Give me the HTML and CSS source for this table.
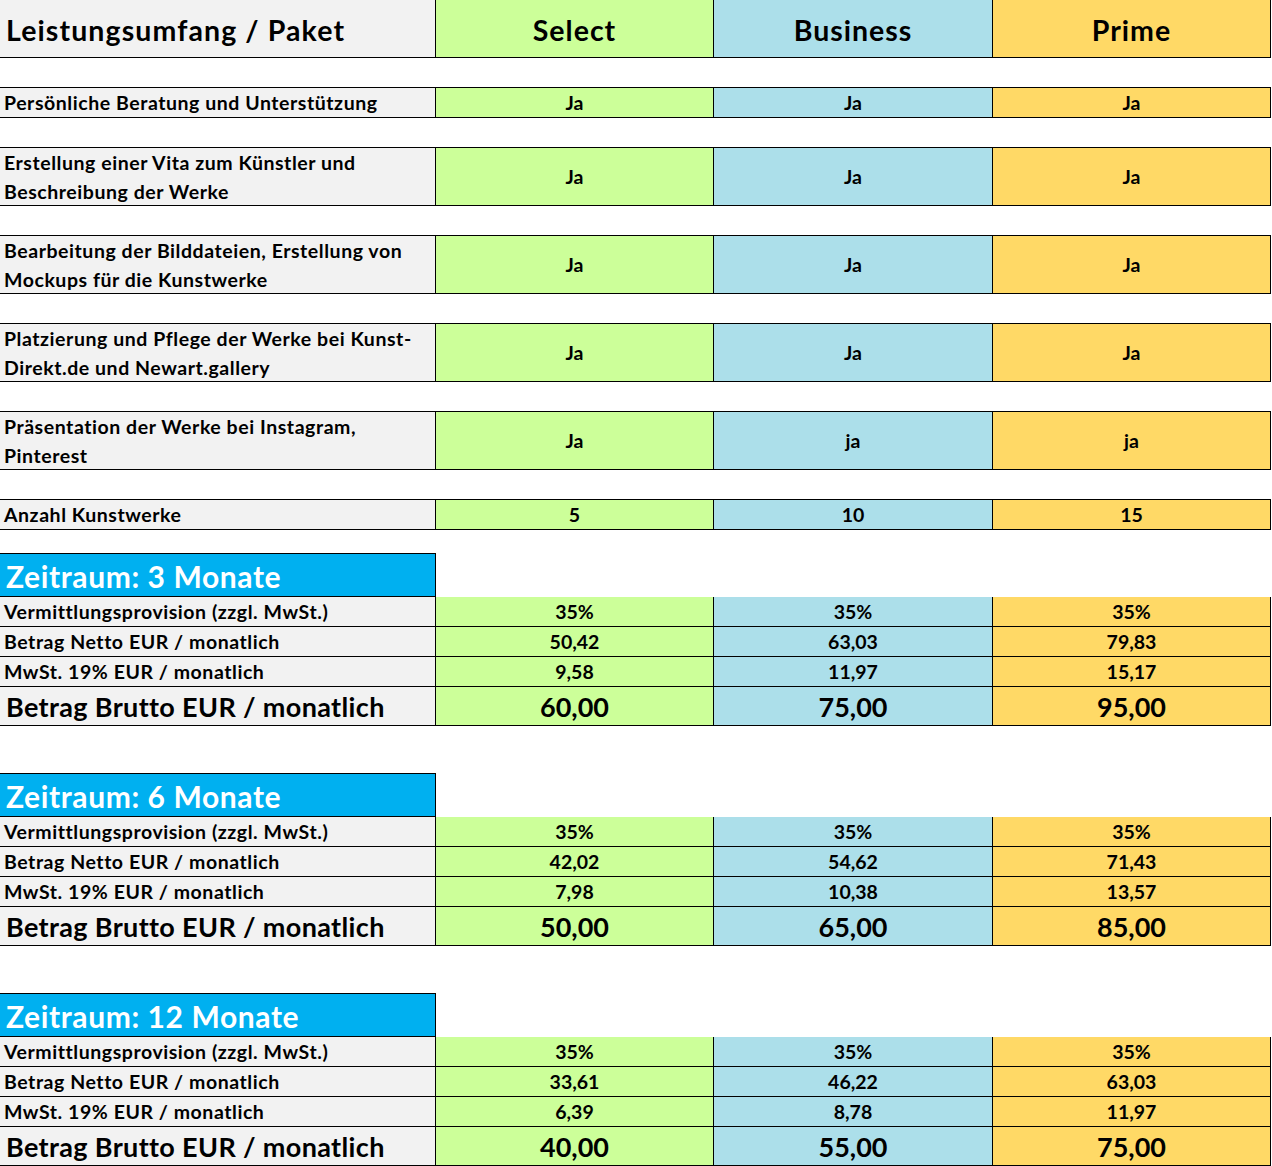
FILE: index.html
```html
<!DOCTYPE html>
<html lang="de">
<head>
<meta charset="utf-8">
<title>Leistungsumfang / Paket</title>
<link rel="stylesheet" href="styles.css">
</head>
<body>
<div class="sheet">
  <div class="row head">
    <div class="cell label">Leistungsumfang / Paket</div>
    <div class="cell c-select">Select</div>
    <div class="cell c-business">Business</div>
    <div class="cell c-prime">Prime</div>
  </div>

  <div class="block feat">
    <div class="row single">
      <div class="cell label">Persönliche Beratung und Unterstützung</div>
      <div class="cell c-select">Ja</div>
      <div class="cell c-business">Ja</div>
      <div class="cell c-prime">Ja</div>
    </div>
  </div>

  <div class="block feat">
    <div class="row double">
      <div class="cell label">Erstellung einer Vita zum Künstler und Beschreibung der Werke</div>
      <div class="cell c-select">Ja</div>
      <div class="cell c-business">Ja</div>
      <div class="cell c-prime">Ja</div>
    </div>
  </div>

  <div class="block feat">
    <div class="row double">
      <div class="cell label">Bearbeitung der Bilddateien, Erstellung von Mockups für die Kunstwerke</div>
      <div class="cell c-select">Ja</div>
      <div class="cell c-business">Ja</div>
      <div class="cell c-prime">Ja</div>
    </div>
  </div>

  <div class="block feat">
    <div class="row double">
      <div class="cell label">Platzierung und Pflege der Werke bei Kunst-Direkt.de und Newart.gallery</div>
      <div class="cell c-select">Ja</div>
      <div class="cell c-business">Ja</div>
      <div class="cell c-prime">Ja</div>
    </div>
  </div>

  <div class="block feat">
    <div class="row double">
      <div class="cell label">Präsentation der Werke bei Instagram, Pinterest</div>
      <div class="cell c-select">Ja</div>
      <div class="cell c-business">ja</div>
      <div class="cell c-prime">ja</div>
    </div>
  </div>

  <div class="block feat">
    <div class="row single">
      <div class="cell label">Anzahl Kunstwerke</div>
      <div class="cell c-select">5</div>
      <div class="cell c-business">10</div>
      <div class="cell c-prime">15</div>
    </div>
  </div>

  <div class="block period first">
    <div class="zeitraum">Zeitraum: 3 Monate</div>
    <div class="row single">
      <div class="cell label">Vermittlungsprovision (zzgl. MwSt.)</div>
      <div class="cell c-select">35%</div>
      <div class="cell c-business">35%</div>
      <div class="cell c-prime">35%</div>
    </div>
    <div class="row single">
      <div class="cell label">Betrag Netto EUR / monatlich</div>
      <div class="cell c-select">50,42</div>
      <div class="cell c-business">63,03</div>
      <div class="cell c-prime">79,83</div>
    </div>
    <div class="row single">
      <div class="cell label">MwSt. 19% EUR / monatlich</div>
      <div class="cell c-select">9,58</div>
      <div class="cell c-business">11,97</div>
      <div class="cell c-prime">15,17</div>
    </div>
    <div class="row total">
      <div class="cell label">Betrag Brutto EUR / monatlich</div>
      <div class="cell c-select">60,00</div>
      <div class="cell c-business">75,00</div>
      <div class="cell c-prime">95,00</div>
    </div>
  </div>

  <div class="block period">
    <div class="zeitraum">Zeitraum: 6 Monate</div>
    <div class="row single">
      <div class="cell label">Vermittlungsprovision (zzgl. MwSt.)</div>
      <div class="cell c-select">35%</div>
      <div class="cell c-business">35%</div>
      <div class="cell c-prime">35%</div>
    </div>
    <div class="row single">
      <div class="cell label">Betrag Netto EUR / monatlich</div>
      <div class="cell c-select">42,02</div>
      <div class="cell c-business">54,62</div>
      <div class="cell c-prime">71,43</div>
    </div>
    <div class="row single">
      <div class="cell label">MwSt. 19% EUR / monatlich</div>
      <div class="cell c-select">7,98</div>
      <div class="cell c-business">10,38</div>
      <div class="cell c-prime">13,57</div>
    </div>
    <div class="row total">
      <div class="cell label">Betrag Brutto EUR / monatlich</div>
      <div class="cell c-select">50,00</div>
      <div class="cell c-business">65,00</div>
      <div class="cell c-prime">85,00</div>
    </div>
  </div>

  <div class="block period">
    <div class="zeitraum">Zeitraum: 12 Monate</div>
    <div class="row single">
      <div class="cell label">Vermittlungsprovision (zzgl. MwSt.)</div>
      <div class="cell c-select">35%</div>
      <div class="cell c-business">35%</div>
      <div class="cell c-prime">35%</div>
    </div>
    <div class="row single">
      <div class="cell label">Betrag Netto EUR / monatlich</div>
      <div class="cell c-select">33,61</div>
      <div class="cell c-business">46,22</div>
      <div class="cell c-prime">63,03</div>
    </div>
    <div class="row single">
      <div class="cell label">MwSt. 19% EUR / monatlich</div>
      <div class="cell c-select">6,39</div>
      <div class="cell c-business">8,78</div>
      <div class="cell c-prime">11,97</div>
    </div>
    <div class="row total">
      <div class="cell label">Betrag Brutto EUR / monatlich</div>
      <div class="cell c-select">40,00</div>
      <div class="cell c-business">55,00</div>
      <div class="cell c-prime">75,00</div>
    </div>
  </div>
</div>
</body>
</html>
```

FILE: styles.css
```css
html, body {
  margin: 0;
  padding: 0;
  background: #ffffff;
}

body {
  font-family: "Lato", "Liberation Sans", sans-serif;
  font-weight: 700;
  color: #000000;
}

.sheet {
  width: 1271px;
  display: flex;
  flex-direction: column;
}

.row {
  display: grid;
  grid-template-columns: 435px 278px 279px 279px;
  border-bottom: 1px solid #000000;
}

.cell {
  display: flex;
  align-items: center;
  justify-content: center;
  box-sizing: border-box;
  border-left: 1px solid #000000;
  line-height: 29px;
  min-height: 0;
}

.cell.label {
  border-left: none;
  justify-content: flex-start;
  padding-left: 4px;
  background: #f2f2f2;
  letter-spacing: 0.55px;
}

.c-select { background: #ccff99; }
.c-business { background: #acdfea; }
.c-prime { background: #ffd966; border-right: 1px solid #000000; }

.head {
  grid-template-rows: 57px;
  font-size: 28.5px;
  letter-spacing: 1px;
}
.head .cell {
  padding-top: 4px;
}
.head .cell.label {
  padding-left: 6px;
  letter-spacing: 1.1px;
}

.block.feat {
  margin-top: 29px;
  border-top: 1px solid #000000;
}

.single {
  grid-template-rows: 29px;
  font-size: 19.5px;
}

.double {
  grid-template-rows: 57px;
  font-size: 19.5px;
}
.double .cell.label {
  padding-right: 8px;
}

.total {
  grid-template-rows: 38px;
  font-size: 27px;
}
.total .cell.label {
  padding-left: 6px;
  letter-spacing: 0.35px;
}

.block.period { margin-top: 47px; }
.block.period.first { margin-top: 23px; }

.zeitraum {
  width: 436px;
  height: 44px;
  box-sizing: border-box;
  background: #00b0f0;
  color: #ffffff;
  border-top: 1px solid #000000;
  border-right: 1px solid #000000;
  border-bottom: 1px solid #000000;
  font-size: 30px;
  letter-spacing: 0.6px;
  padding-left: 6px;
  display: flex;
  align-items: flex-end;
  padding-bottom: 2px;
}
```
